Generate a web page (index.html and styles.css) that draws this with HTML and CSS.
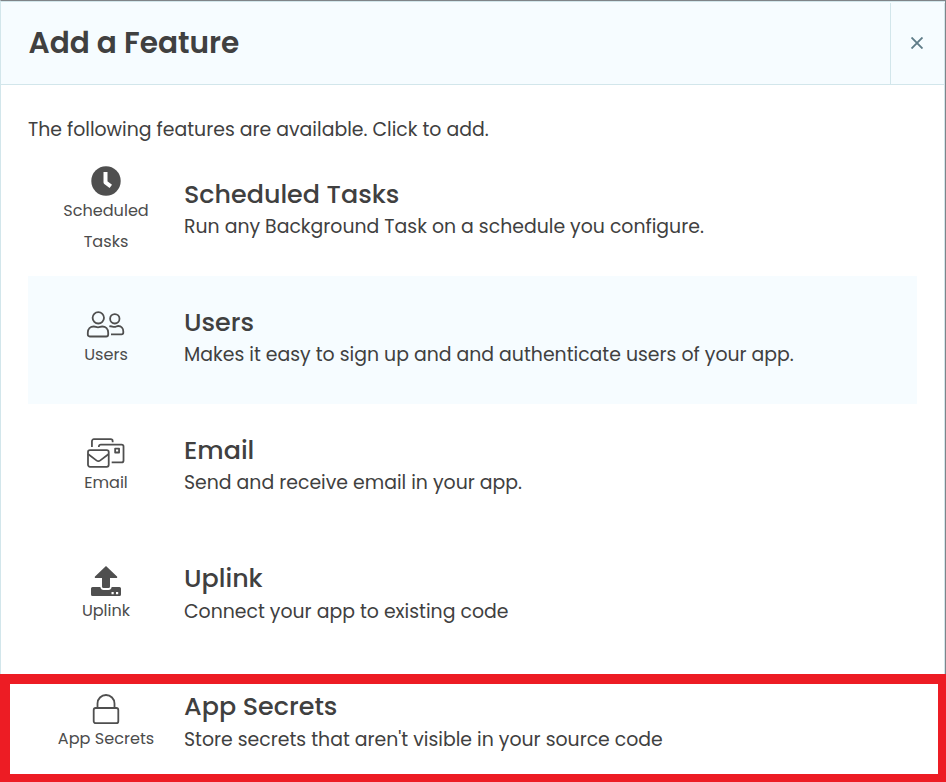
FILE: index.html
```html
<!DOCTYPE html>
<html lang="en">
<head>
<meta charset="utf-8">
<title>Add a Feature</title>
<link rel="stylesheet" href="styles.css">
</head>
<body>
<div class="dialog">
  <header class="header">
    <h1 class="title">Add a Feature</h1>
    <button class="close" aria-label="Close"><svg width="12" height="12" viewBox="0 0 12 12"><path d="M.5.5l11 11M11.5.5L.5 11.500"/></svg></button>
  </header>
  <main class="body">
    <p class="intro">The following features are available. Click to add.</p>
    <div class="feature">
      <div class="tile tile-tall">
        <svg class="icon" width="30" height="30" viewBox="0 0 30 30"><circle class="fill" cx="15" cy="15" r="14.7"/><path class="cut" d="M14.500 6v10.300l5.300 4"/></svg>
        <span class="label">Scheduled<br>Tasks</span>
      </div>
      <div class="text"><h2 class="name">Scheduled Tasks</h2><p class="desc">Run any Background Task on a schedule you configure.</p></div>
    </div>
    <div class="feature active">
      <div class="tile">
        <svg class="icon" width="38" height="30" viewBox="0 0 38 30"><circle cx="11.300" cy="7.800" r="5.700"/><path d="M.8 24.500v-1.800c0-3.700 2.500-6.200 6-6.200 1.600 0 2.500.8 4.200.8s2.600-.8 4.200-.8c3.500 0 6 2.500 6 6.200v1.800c0 1.300-.7 2-2 2H2.800c-1.300 0-2-.7-2-2z"/><circle cx="27.800" cy="8.800" r="4.700"/><path d="M22.300 16.500c2.200-.8 3 .4 5 .4s2-.9 4-.9c3 0 5 2.300 5 5.500v1c0 1.200-.7 1.900-1.800 1.900H24"/></svg>
        <span class="label">Users</span>
      </div>
      <div class="text"><h2 class="name">Users</h2><p class="desc">Makes it easy to sign up and and authenticate users of your app.</p></div>
    </div>
    <div class="feature">
      <div class="tile">
        <svg class="icon" width="38" height="30" viewBox="0 0 38.500 30"><path d="M5 9V3a2 2 0 0 1 2-2h17a2 2 0 0 1 2 2v1"/><path d="M12 9V8.500a2 2 0 0 1 2-2h21a2 2 0 0 1 2 2v14a2 2 0 0 1-2 2H25"/><rect x="1" y="12" width="21" height="17" rx="2"/><path d="M1 16l8.500 6.500c1.200.9 2.800.9 4 0L22 16"/><path d="M28.500 10.500h4v4h-4z"/></svg>
        <span class="label">Email</span>
      </div>
      <div class="text"><h2 class="name">Email</h2><p class="desc">Send and receive email in your app.</p></div>
    </div>
    <div class="feature">
      <div class="tile">
        <svg class="icon" width="30" height="30" viewBox="0 0 30 30"><path class="fill" d="M15 0L26 10.500c.6.800.2 1.500-.8 1.500H19v8.500a1.500 1.500 0 0 1-1.500 1.500h-5a1.500 1.500 0 0 1-1.500-1.500V12H4.800c-1 0-1.400-.7-.8-1.500z"/><path class="fill" fill-rule="evenodd" d="M1.500 21H9.300c.4 1.900 1.500 3 3.200 3h5c1.700 0 2.800-1.100 3.200-3h7.800a1.500 1.500 0 0 1 1.500 1.500v6a1.500 1.500 0 0 1-1.500 1.500h-27A1.500 1.500 0 0 1 0 28.500v-6A1.500 1.500 0 0 1 1.500 21zM20.500 26v2.200h2.200v-2.200zM25 26v2.200h2.200v-2.200z"/></svg>
        <span class="label">Uplink</span>
      </div>
      <div class="text"><h2 class="name">Uplink</h2><p class="desc">Connect your app to existing code</p></div>
    </div>
    <div class="feature">
      <div class="tile">
        <svg class="icon" width="30" height="30" viewBox="0 0 30 30"><rect x="2.700" y="14" width="24.600" height="15.200" rx="2"/><path d="M6.500 14V9.500a8.500 8.500 0 0 1 17 0V14"/></svg>
        <span class="label">App Secrets</span>
      </div>
      <div class="text"><h2 class="name">App Secrets</h2><p class="desc">Store secrets that aren't visible in your source code</p></div>
    </div>
  </main>
</div>
<div class="highlight"></div>
</body>
</html>
```
FILE: styles.css
```css
*{box-sizing:border-box}
body{margin:0;height:782px;overflow:hidden;background:#fff;color:#404040;font-family:Poppins,Inter,sans-serif}
h1,h2,p{margin:0}
.dialog{height:782px;border:1px solid #d2e6eb;border-top-color:#7f8488;border-right:1px solid #7f8488}
.header{display:flex;height:84px;background:#f6fcff;border-top:1px solid #d2e6eb;border-bottom:1px solid #d2e6eb}
.title{flex:1;padding-left:27.500px;font-size:29.600px;line-height:81px;font-weight:600}
.close{width:55px;margin-top:1px;padding:2px 2px 0 0;border:0;border-left:1px solid #d2e6eb;border-right:1px solid #d2e6eb;background:none}
.close svg{fill:none;stroke:#5f7c88;stroke-width:1.900}
.body{padding:31px 27px 0;border-right:1px solid #d2e6eb}
.intro{height:32px;font-size:18.880px;line-height:28px}
.feature{display:flex;height:128.100px}
.active{background:#f6fcff}
.tile{width:156px;padding-top:34px;display:flex;flex-direction:column;align-items:center}
.tile-tall{padding-top:18px}
.icon{fill:none;stroke:#4f4f4f;stroke-width:1.800;stroke-linejoin:round;overflow:visible}
.fill{fill:#4f4f4f;stroke:none}
.cut{stroke:#fff;stroke-width:4}
.label{margin-top:-1px;font-size:16.100px;line-height:31px;text-align:center;color:#4c4c4c}
.text{padding-top:29px}
.name{font-size:25.400px;line-height:34px;font-weight:500}
.desc{margin-top:.25px;font-size:18.880px;line-height:31px}
.highlight{position:absolute;left:0;top:674px;width:946px;height:108px;border:solid #ed1c24;border-width:10px 8px 8px 10px}
```
